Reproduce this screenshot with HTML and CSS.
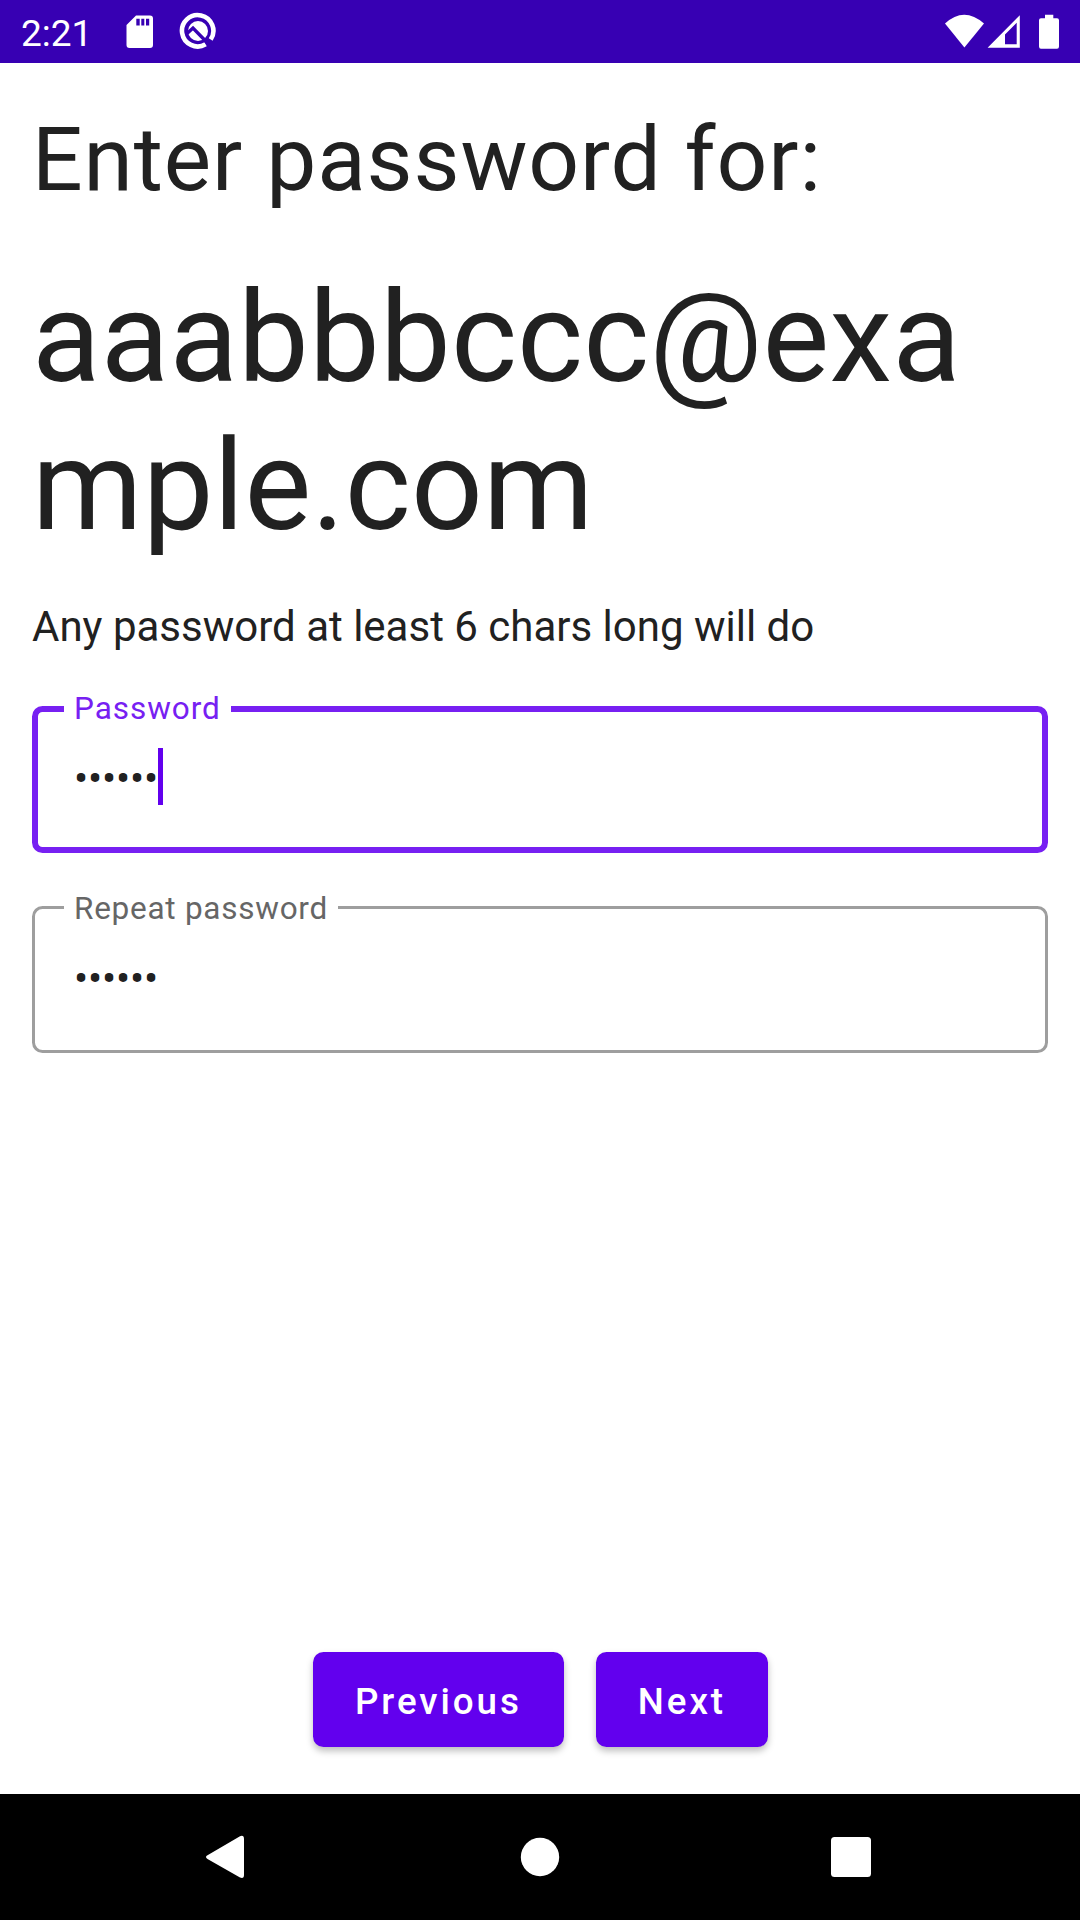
FILE: index.html
```html
<!DOCTYPE html>
<html lang="en">
<head>
<meta charset="utf-8">
<title>Enter password</title>
<link rel="stylesheet" href="styles.css">
</head>
<body>
<div class="screen">
  <header class="status-bar">
    <span class="clock">2:21</span>
    <svg class="icon-sd" width="28" height="34" viewBox="0 0 28 34">
      <path fill="#fff" fill-rule="evenodd" d="M10 .5H24Q27 .5 27 3.500V30Q27 33 24 33H3.500Q.5 33 .5 30V10ZM10.300 3.700V10.500H13.700V3.700ZM15.300 3.700V10.500H18.300V3.700ZM20 3.700V10.500H23.200V3.700Z"/>
    </svg>
    <svg class="icon-q" width="38" height="38" viewBox="0 0 38 38">
      <path d="M26.600 32.300A15.700 15.700 0 1 1 31.700 27.500" fill="none" stroke="#fff" stroke-width="4.600"/>
      <circle cx="19" cy="19" r="10" fill="#fff"/>
      <path d="M8 21.500L14 16L31.500 34" fill="none" stroke="#3700b3" stroke-width="3.400"/>
    </svg>
    <svg class="icon-signal" width="120" height="36" viewBox="0 0 120 36">
      <path fill="#fff" d="M1 9.500Q20 -8 40 9.500L20.400 33.500Z"/>
      <path fill="#fff" fill-rule="evenodd" d="M43.600 33.700L75.800 1.200V33.700ZM61 30.300H72.700V8.800L61 20.500Z"/>
      <path fill="#fff" d="M101 .7H109.300V4.200H113Q115 4.200 115 6.200V32.500Q115 34.700 113 34.700H97Q95 34.700 95 32.500V6.200Q95 4.200 97 4.200H101Z"/>
    </svg>
  </header>
  <main class="content">
    <h1 class="title">Enter password for:</h1>
    <p class="email">aaabbbccc@example.com</p>
    <p class="hint">Any password at least 6 chars long will do</p>
    <div class="field field-focused">
      <span class="label">Password</span>
      <span class="value">••••••</span><span class="cursor"></span>
    </div>
    <div class="field">
      <span class="label">Repeat password</span>
      <span class="value">••••••</span>
    </div>
    <div class="actions">
      <button class="button">Previous</button>
      <button class="button">Next</button>
    </div>
  </main>
  <nav class="nav-bar">
    <svg width="44" height="44" viewBox="0 0 44 44"><path fill="#fff" d="M4.500 20.300L37 1.200Q41 -.3 41 4V40Q41 44 37 42.500L4.500 24Q1.500 22 4.500 20.300Z"/></svg>
    <svg width="44" height="44" viewBox="0 0 44 44"><circle cx="23" cy="22" r="19.200" fill="#fff"/></svg>
    <svg width="44" height="44" viewBox="0 0 44 44"><rect x="0" y="2" width="40" height="40" rx="3.500" fill="#fff"/></svg>
  </nav>
</div>
</body>
</html>
```
FILE: styles.css
```css
* {
  box-sizing: border-box;
}

body {
  margin: 0;
  background: #fff;
  color: #212121;
  font-family: Roboto, sans-serif;
}

.screen {
  display: flex;
  flex-direction: column;
  width: 1080px;
  height: 1920px;
}

.status-bar {
  display: flex;
  align-items: flex-start;
  height: 63px;
  padding: 0 16px 0 21px;
  background: #3700b3;
  color: #fff;
}

.clock {
  width: 105px;
  padding-top: 12px;
  font-size: 37px;
  line-height: 43px;
}

.icon-sd {
  margin-top: 15px;
}

.icon-q {
  margin: 12px 0 0 25px;
}

.icon-signal {
  margin: 13.5px 0 0 auto;
}

.content {
  display: flex;
  flex: 1;
  flex-direction: column;
  padding: 44px 32px 47px;
}

.title {
  margin: 0;
  font-size: 89.25px;
  font-weight: 400;
  line-height: 105px;
  letter-spacing: 0.87px;
}

.email {
  margin: 52px 0 0;
  font-size: 126px;
  line-height: 148px;
  letter-spacing: 0.17px;
  overflow-wrap: anywhere;
}

.hint {
  margin: 42px 0 0;
  font-size: 42px;
  line-height: 49px;
}

.field {
  position: relative;
  display: flex;
  align-items: flex-start;
  height: 147px;
  margin-top: 53px;
  padding: 39px;
  border: 3px solid #9e9e9e;
  border-radius: 10.5px;
}

.field-focused {
  margin-top: 55px;
  padding: 36px;
  border: 6px solid #7720f2;
}

.label {
  position: absolute;
  top: -19px;
  left: 29px;
  padding: 0 10px;
  background: #fff;
  color: #666;
  font-size: 31.5px;
  line-height: 37px;
  letter-spacing: 0.74px;
}

.field-focused .label {
  top: -22px;
  left: 26px;
  color: #7720f2;
  letter-spacing: 0.96px;
}

.value {
  font-size: 42px;
  line-height: 61px;
  letter-spacing: -0.15px;
}

.cursor {
  width: 5.25px;
  height: 57px;
  background: #6200ee;
}

.actions {
  display: flex;
  justify-content: center;
  gap: 32px;
  margin-top: auto;
  padding-left: 1px;
}

.button {
  height: 95px;
  padding: 3px 42px 0;
  border: 0;
  border-radius: 10.5px;
  background: #6200ee;
  box-shadow: 0 4px 7px rgba(0, 0, 0, 0.26);
  color: #fff;
  font-family: inherit;
  font-size: 36.75px;
  font-weight: 500;
  letter-spacing: 2.93px;
}

.nav-bar {
  display: flex;
  align-items: center;
  justify-content: space-between;
  height: 126px;
  padding: 0 205px 0 203px;
  background: #000;
}
```
